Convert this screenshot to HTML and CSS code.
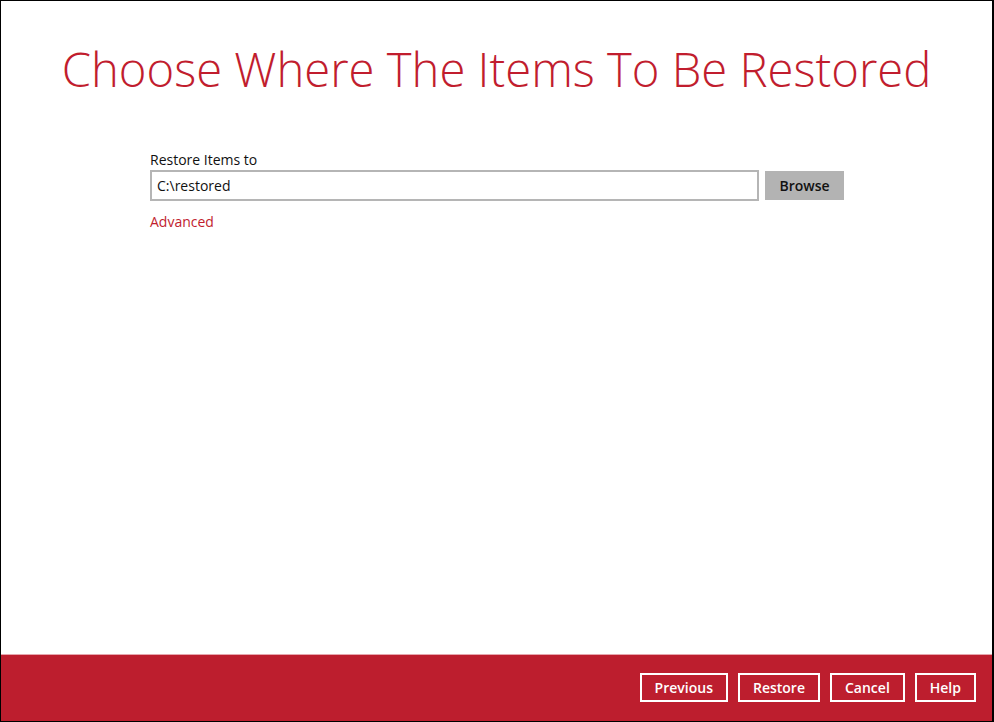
FILE: index.html
```html
<!DOCTYPE html>
<html>
<head>
<meta charset="utf-8">
<link rel="stylesheet" href="styles.css">
</head>
<body>
<div class="frame">
  <main class="content">
    <h1 class="title">Choose Where The Items To Be Restored</h1>
    <div class="form">
      <label class="label">Restore Items to</label>
      <div class="row">
        <div class="input">C:\restored</div>
        <button class="browse">Browse</button>
      </div>
      <a class="advanced">Advanced</a>
    </div>
  </main>
  <footer class="footer">
    <button class="fbtn">Previous</button>
    <button class="fbtn">Restore</button>
    <button class="fbtn">Cancel</button>
    <button class="fbtn">Help</button>
  </footer>
</div>
</body>
</html>
```
FILE: styles.css
```css
* { box-sizing: border-box; }
html, body { margin: 0; padding: 0; background: #fff; }
body { font-family: "Open Sans", "Noto Sans", sans-serif; }
.frame {
  width: 994px;
  height: 722px;
  border: 1px solid #000;
  border-right-width: 2px;
  display: flex;
  flex-direction: column;
  background: #fff;
}
.content { flex: 1; display: flex; flex-direction: column; align-items: center; }
.title {
  margin: 36px 0 0;
  font-weight: 300;
  font-size: 47.2px;
  line-height: 64px;
  color: #c11d2e;
  letter-spacing: 0;
}
.form { width: 694px; margin-top: 50px; margin-left: 149px; align-self: flex-start; display: flex; flex-direction: column; }
.label { font-size: 14px; line-height: 18px; color: #111; }
.row { display: flex; align-items: center; gap: 6px; margin-top: 1px; }
.input {
  width: 609px; height: 31px;
  border: 2px solid #b5b5b5;
  font-size: 14px; line-height: 27px;
  padding-left: 5px; color: #111;
}
.browse {
  width: 79px; height: 29px;
  background: #b3b3b3; border: none;
  font-family: inherit; font-size: 14px; font-weight: 600; color: #111;
  padding: 0;
}
.advanced { color: #c11d2e; font-size: 14px; line-height: 18px; margin-top: 12px; }
.footer {
  height: 67px;
  background: #bd1e2e;
  border-top: 1px solid #e6a6ad;
  display: flex;
  justify-content: flex-end;
  align-items: center;
  gap: 10px;
  padding: 0 16px 2px 0;
}
.fbtn {
  height: 29px;
  background: transparent;
  border: 2px solid #fff;
  color: #fff;
  font-family: inherit; font-size: 14px; font-weight: 600;
  padding: 0 13px;
}
```
